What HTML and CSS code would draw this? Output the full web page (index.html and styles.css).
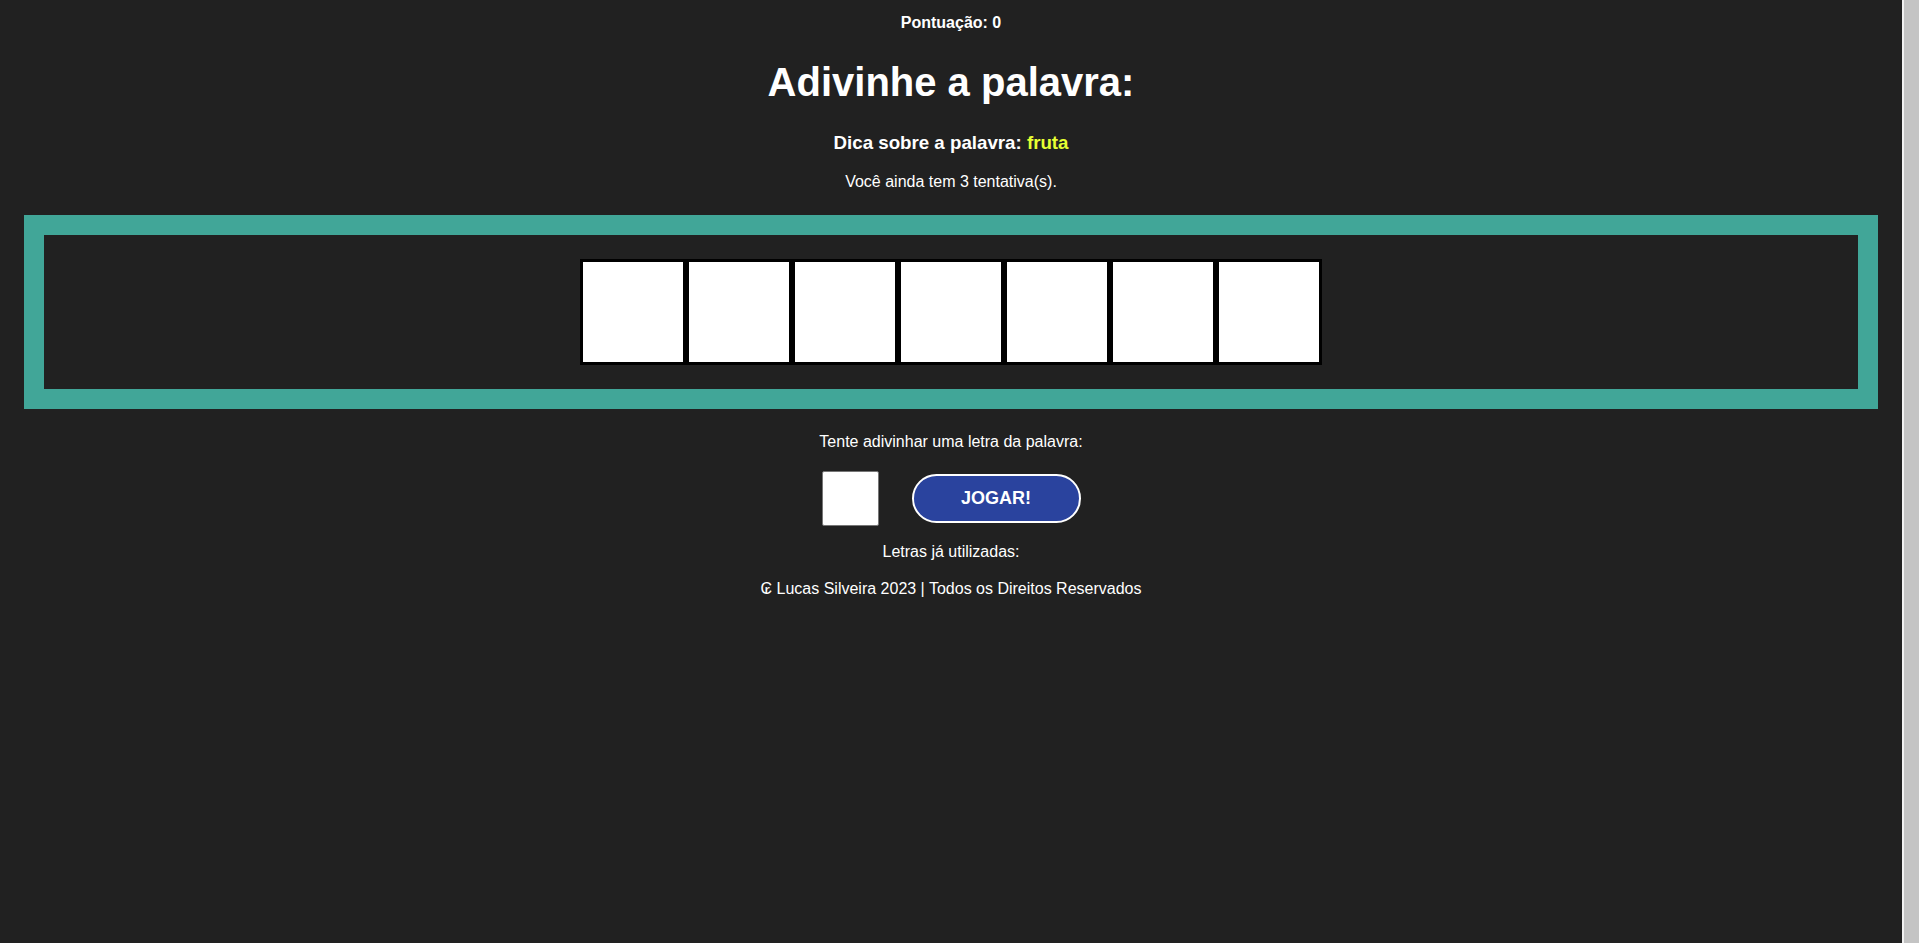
FILE: index.html
```html
<!DOCTYPE html>
<html lang="pt-BR">
<head>
<meta charset="utf-8">
<title>Adivinhe a palavra</title>
<link rel="stylesheet" href="styles.css">
</head>
<body>
<div class="window">
  <main class="page">
    <p class="score">Pontuação: 0</p>
    <h1 class="title">Adivinhe a palavra:</h1>
    <h3 class="hint">Dica sobre a palavra: <span class="hint-word">fruta</span></h3>
    <p class="tries">Você ainda tem 3 tentativa(s).</p>
    <section class="board">
      <div class="letters">
        <div class="letter"></div>
        <div class="letter"></div>
        <div class="letter"></div>
        <div class="letter"></div>
        <div class="letter"></div>
        <div class="letter"></div>
        <div class="letter"></div>
      </div>
    </section>
    <p class="prompt">Tente adivinhar uma letra da palavra:</p>
    <div class="controls">
      <input class="guess" type="text" maxlength="1">
      <button class="play" type="button">JOGAR!</button>
    </div>
    <p class="used">Letras já utilizadas:</p>
    <footer class="footer">₢ Lucas Silveira 2023 | Todos os Direitos Reservados</footer>
  </main>
  <div class="scrollbar"><div class="scroll-thumb"></div></div>
</div>
</body>
</html>
```

FILE: styles.css
```css
html {
  background: #212121;
}
body {
  margin: 0;
  background: #212121;
  color: #ffffff;
  font-family: "Liberation Sans", Arial, "DejaVu Sans", sans-serif;
  overflow: hidden;
}
.window {
  display: flex;
  height: 100vh;
}
.page {
  flex: 1;
  min-width: 0;
  display: flex;
  flex-direction: column;
  align-items: center;
  padding-top: 14px;
  text-align: center;
}
.scrollbar {
  width: 17px;
  flex: none;
  display: flex;
  background: #f1f1f1;
  padding: 0 0 0 2px;
  box-sizing: border-box;
}
.scroll-thumb {
  flex: 1;
  background: #c4c4c4;
}
.score {
  margin: 0;
  font-size: 16px;
  font-weight: bold;
}
.title {
  margin: 28px 0 0;
  font-size: 40px;
  font-weight: bold;
}
.hint {
  margin: 26.5px 0 0;
  font-size: 18.72px;
  font-weight: bold;
}
.hint-word {
  color: #e6ff33;
}
.tries {
  margin: 19.5px 0 0;
  font-size: 16px;
}
.board {
  box-sizing: border-box;
  width: 97.5%;
  margin-top: 24.3px;
  border: 20px solid #41a698;
  padding: 24px 0;
}
.letters {
  display: flex;
  justify-content: center;
}
.letter {
  width: 100px;
  height: 100px;
  background: #ffffff;
  border: 3px solid #000000;
}
.prompt {
  margin: 23.3px 0 0;
  font-size: 16px;
}
.controls {
  display: flex;
  align-items: center;
  gap: 33px;
  margin-top: 20.3px;
}
.guess {
  box-sizing: border-box;
  width: 57px;
  height: 55px;
  margin: 0;
  padding: 0;
  border: 1px solid #767676;
  border-radius: 2px;
  background: #ffffff;
  font-family: inherit;
  font-size: 24px;
  text-align: center;
}
.play {
  box-sizing: border-box;
  width: 169px;
  height: 49px;
  margin: 0;
  padding: 0;
  border: 2px solid #ffffff;
  border-radius: 25px;
  background: #2a439e;
  color: #ffffff;
  font-family: inherit;
  font-size: 18px;
  font-weight: bold;
  cursor: pointer;
}
.used {
  margin: 17.5px 0 0;
  font-size: 16px;
}
.footer {
  margin-top: 18.6px;
  font-size: 16px;
}
```
